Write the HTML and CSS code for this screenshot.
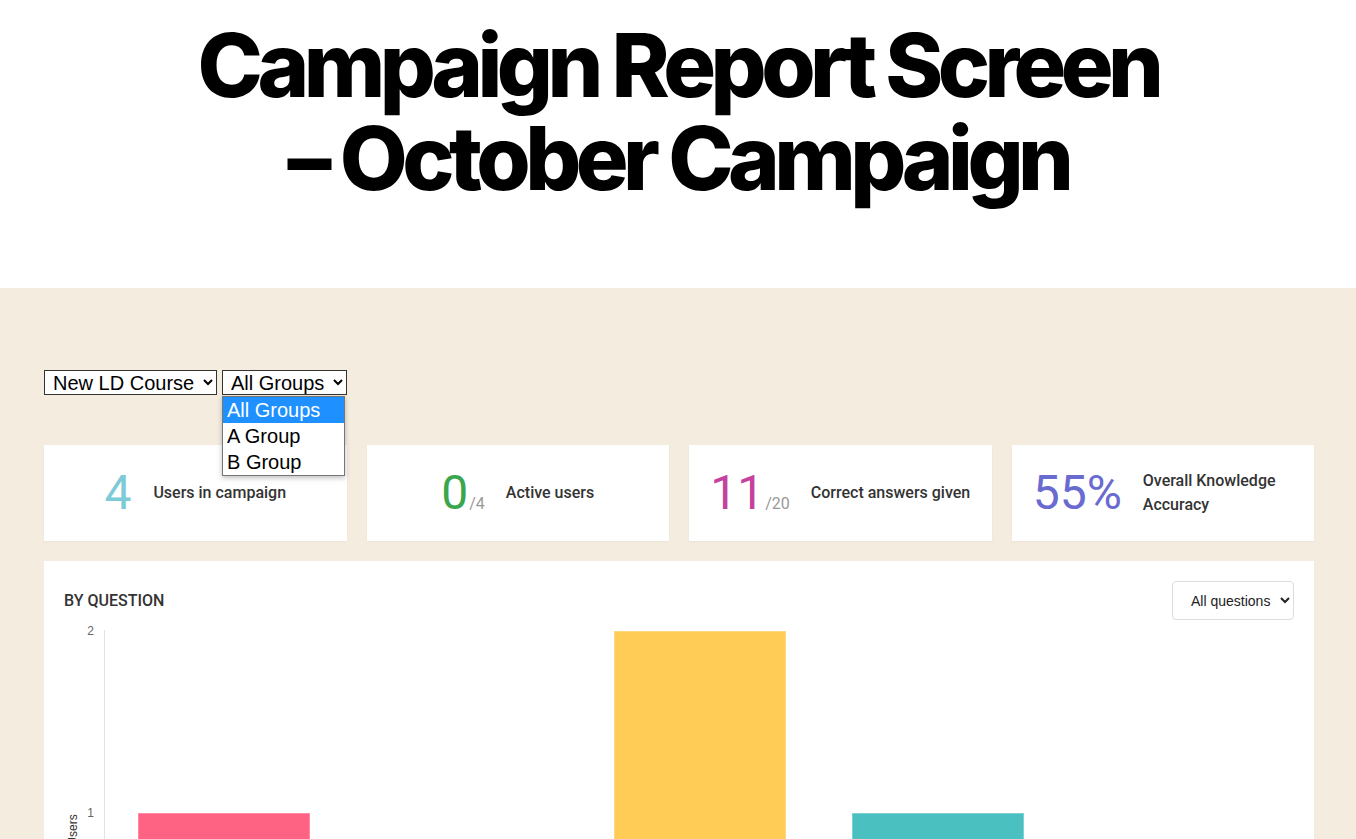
FILE: index.html
```html
<!DOCTYPE html>
<html lang="en">

<head>
  <meta charset="UTF-8">
  <meta name="viewport" content="width=device-width, initial-scale=1.0">
  <title>Campaign Report Screen – October Campaign</title>
  <link rel="stylesheet" href="styles.css">
</head>

<body>
  <header class="page-header">
    <h1>Campaign Report Screen – October Campaign</h1>
  </header>

  <main class="report">
    <div class="filters">
      <select class="filter-select">
        <option>New LD Course</option>
      </select>
      <div class="filter-wrap">
        <select class="filter-select">
          <option>All Groups</option>
          <option>A Group</option>
          <option>B Group</option>
        </select>
        <!-- open dropdown list -->
        <ul class="dropdown">
          <li class="active">All Groups</li>
          <li>A Group</li>
          <li>B Group</li>
        </ul>
      </div>
    </div>

    <div class="stats">
      <div class="stat-card">
        <div class="stat-value teal wide">4</div>
        <div class="stat-label">Users in campaign</div>
      </div>
      <div class="stat-card">
        <div class="stat-value green">0<span class="stat-total">/4</span></div>
        <div class="stat-label">Active users</div>
      </div>
      <div class="stat-card">
        <div class="stat-value pink">11<span class="stat-total">/20</span></div>
        <div class="stat-label">Correct answers given</div>
      </div>
      <div class="stat-card">
        <div class="stat-value purple">55%</div>
        <div class="stat-label narrow">Overall Knowledge Accuracy</div>
      </div>
    </div>

    <section class="chart-card">
      <div class="chart-head">
        <h2>By question</h2>
        <select class="question-select">
          <option>All questions</option>
        </select>
      </div>

      <svg class="chart" width="1230" height="400" viewBox="0 0 1230 400">
        <line x1="40.5" y1="5" x2="40.5" y2="400" stroke="#e3e3e3" stroke-width="1" />
        <text class="tick" x="30" y="10">2</text>
        <text class="tick" x="30" y="192">1</text>
        <text class="axis-title" transform="translate(13 205) rotate(-90)">Users</text>

        <rect x="74.5" y="188.5" width="171" height="220" fill="#ff6384" stroke="#ff8aa2" />
        <rect x="550.5" y="6.5" width="171" height="400" fill="#ffcd56" stroke="#ffd97f" />
        <rect x="788.5" y="188.5" width="171" height="220" fill="#4bc0c0" stroke="#7fd2d2" />
      </svg>
    </section>
  </main>
</body>

</html>
```

FILE: styles.css
```css
:root {
  --beige: #f3ecdf;
  --white: #ffffff;
  --text-color: #333;
  --muted: #999;
}

* {
  box-sizing: border-box;
}

body {
  margin: 0;
  background-color: var(--white);
  color: var(--text-color);
}

.page-header {
  padding: 19px 0 83px;
  text-align: center;
}

.page-header h1 {
  max-width: 1000px;
  margin: 0 auto;
  font-family: Inter, 'Liberation Sans', sans-serif;
  font-size: 88px;
  font-weight: 800;
  line-height: 93px;
  letter-spacing: -0.063em;
  color: #000;
}

.report {
  background-color: var(--beige);
  padding: 82px 42px 40px 44px;
}

/* filters */

.filters {
  display: flex;
  gap: 5px;
  margin-bottom: 50px;
}

.filter-wrap {
  position: relative;
}

.filter-select {
  height: 25px;
  padding: 0 5px 0 4px;
  border: 1px solid #333;
  border-radius: 0;
  background-color: var(--white);
  color: #000;
  font-family: 'Liberation Sans', Arial, sans-serif;
  font-size: 20px;
}

.dropdown {
  position: absolute;
  top: 26px;
  left: 0;
  width: 123px;
  margin: 0;
  padding: 0;
  list-style: none;
  background-color: var(--white);
  border: 1px solid #767676;
  box-shadow: 0 2px 5px rgba(0, 0, 0, 0.25);
  font-family: 'Liberation Sans', Arial, sans-serif;
  font-size: 20px;
  color: #000;
  z-index: 2;
}

.dropdown li {
  height: 26px;
  line-height: 26px;
  padding: 0 4px;
}

.dropdown li.active {
  background-color: #1e90ff;
  color: var(--white);
}

/* stat cards */

.stats {
  display: grid;
  grid-template-columns: repeat(4, 1fr);
  gap: 20px;
  margin-bottom: 20px;
}

.stat-card {
  height: 96px;
  display: flex;
  align-items: center;
  justify-content: center;
  gap: 21px;
  background-color: var(--white);
  box-shadow: 0 1px 2px rgba(0, 0, 0, 0.04);
  font-family: Roboto, 'Liberation Sans', sans-serif;
}

.stat-value {
  font-size: 48px;
  line-height: 1;
  font-weight: 400;
  white-space: nowrap;
}

.stat-value.wide {
  margin-right: 1px;
}

.stat-total {
  font-size: 16px;
  color: var(--muted);
  margin-left: 1px;
}

.stat-label {
  font-size: 16px;
  font-weight: 500;
  line-height: 24px;
  color: var(--text-color);
}

.stat-label.narrow {
  max-width: 150px;
}

.teal { color: #7ecbd8; }
.green { color: #3aa64e; }
.pink { color: #c4419d; }
.purple { color: #6a6bd0; }

/* chart */

.chart-card {
  background-color: var(--white);
  padding: 20px;
  overflow: hidden;
}

.chart-head {
  display: flex;
  align-items: center;
  justify-content: space-between;
  margin-bottom: 5px;
}

.chart-head h2 {
  margin: 0;
  font-family: Roboto, 'Liberation Sans', sans-serif;
  font-size: 16px;
  font-weight: 500;
  text-transform: uppercase;
  color: var(--text-color);
}

.question-select {
  height: 39px;
  padding: 0 6px 0 14px;
  border: 1px solid #ddd;
  border-radius: 4px;
  background-color: var(--white);
  font-family: 'Liberation Sans', Arial, sans-serif;
  font-size: 14px;
  color: #222;
}

.chart {
  display: block;
}

.chart .tick {
  font-family: 'Liberation Sans', Arial, sans-serif;
  font-size: 12px;
  fill: #666;
  text-anchor: end;
}

.chart .axis-title {
  font-family: 'Liberation Sans', Arial, sans-serif;
  font-size: 12px;
  fill: #333;
  text-anchor: middle;
}
```
